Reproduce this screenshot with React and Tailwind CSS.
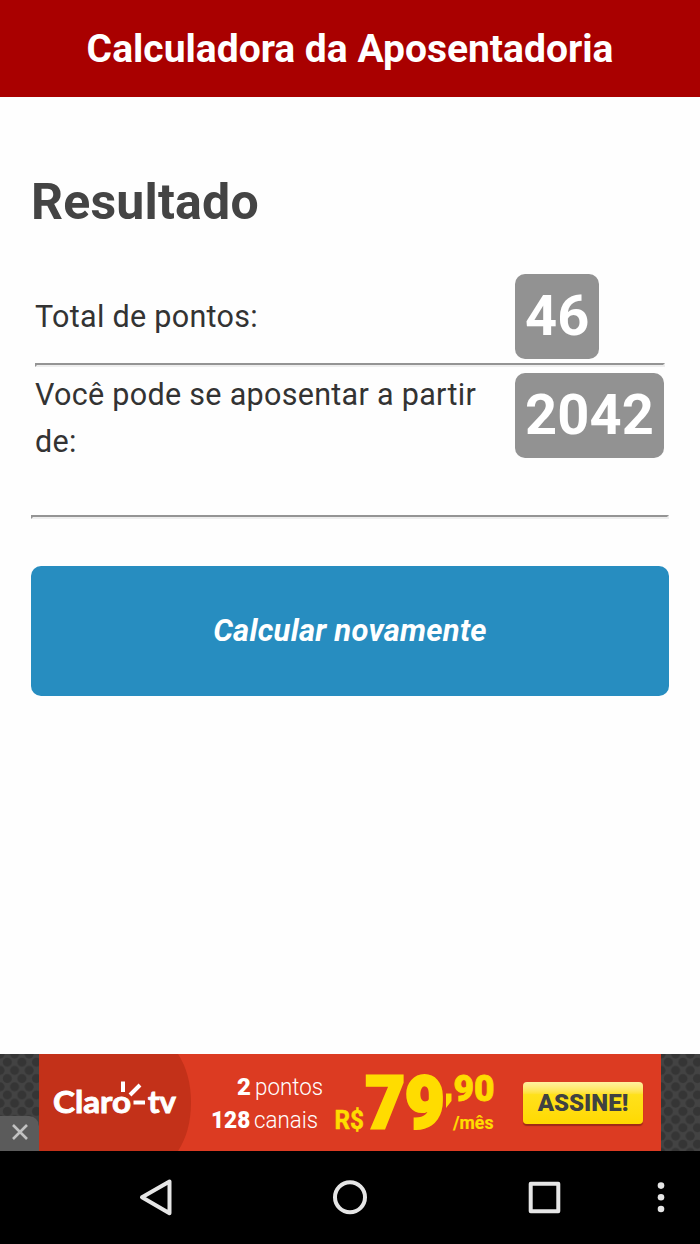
import React from "react";

function Rule() {
  return <hr className="h-1 border-2 border-t-[#949494] border-l-[#949494] border-r-[#eeeeee] border-b-[#eeeeee]" />;
}

function Badge({ children }) {
  return (
    <span className="inline-flex h-[85px] items-center rounded-[10px] bg-[#929292] px-[10px] pb-[1px] text-[56px] leading-none font-bold tracking-[0.100px] text-white">
      {children}
    </span>
  );
}

function Mesh({ id, className }) {
  return (
    <svg className={className} width="39" height="97" viewBox="0 0 39 97" aria-hidden="true">
      <defs>
        <pattern id={id} width="14.600" height="16.400" patternUnits="userSpaceOnUse">
          <rect width="14.600" height="16.400" fill="#434343" />
          <g fill="#353535">
            <circle cx="0" cy="0" r="4.600" />
            <circle cx="14.600" cy="0" r="4.600" />
            <circle cx="7.300" cy="8.200" r="4.600" />
            <circle cx="0" cy="16.400" r="4.600" />
            <circle cx="14.600" cy="16.400" r="4.600" />
          </g>
        </pattern>
      </defs>
      <rect width="39" height="97" fill={"url(#" + id + ")"} />
    </svg>
  );
}

function ClaroLogo() {
  return (
    <svg className="shrink-0" width="152" height="97" viewBox="0 0 152 97" aria-label="Claro tv">
      <path d="M0 0H139Q152 20 152 48.500T139 97H0Z" fill="#c33119" />
      <g fill="#fff" stroke="#fff" strokeWidth="0.900" fontFamily="Lato, sans-serif" fontWeight="700" fontSize="31">
        <text x="14" y="59" textLength="78" lengthAdjust="spacingAndGlyphs">Claro</text>
        <text x="109" y="59" textLength="28" lengthAdjust="spacingAndGlyphs">tv</text>
      </g>
      <path d="M84 27.500v10.500 M101 31l-10 10 M94.500 48.500h11.500" stroke="#fff" strokeWidth="4" fill="none" />
    </svg>
  );
}

function Price() {
  return (
    <svg className="shrink-0" width="176" height="97" viewBox="0 0 176 97" aria-label="R$79,90/mês">
      <g fill="#ffdc00" stroke="#ffdc00" fontFamily="Roboto, sans-serif">
        <text x="1.500" y="75" fontSize="25" fontWeight="700" strokeWidth="0.500" textLength="29.500" lengthAdjust="spacingAndGlyphs">R$</text>
        <text x="32.500" y="73.500" fontSize="72" fontWeight="900" strokeWidth="3" textLength="79" lengthAdjust="spacingAndGlyphs">79</text>
        <path d="M113 39.500h5.500v7.500l-5.500 7z" stroke="none" />
        <text x="120.500" y="46.500" fontSize="36" fontWeight="900" strokeWidth="0.800" textLength="41" lengthAdjust="spacingAndGlyphs">90</text>
        <text x="120" y="74.500" fontSize="18.500" fontWeight="700" strokeWidth="0.200" textLength="40.500" lengthAdjust="spacingAndGlyphs">/mês</text>
      </g>
    </svg>
  );
}

function AdBanner() {
  return (
    <aside className="relative flex h-[97px] bg-[#dc3b22]">
      <Mesh id="mesh-left" className="shrink-0" />
      <ClaroLogo />
      <div className="w-[142px] shrink-0 pt-[17px] text-[24px] leading-[33px] font-light text-white">
        <p className="flex gap-[4px] pl-[46px]">
          <b className="font-black">2</b>
          <span className="origin-left scale-x-[0.930]">pontos</span>
        </p>
        <p className="flex gap-[4px] pl-[20px]">
          <b className="w-[39px] origin-left scale-x-[0.940] font-black">128</b>
          <span className="origin-left scale-x-[0.930]">canais</span>
        </p>
      </div>
      <Price />
      <div className="flex flex-1 items-center">
        <button className="ml-[14px] h-[42px] w-[120px] shrink-0 rounded-[4px] bg-linear-to-b from-[#fff0a0] via-[#ffe11a] via-30% to-[#ffd900] text-[24px] leading-none font-black text-[#404142] shadow-[0_2px_1px_#9e2a18]">
          ASSINE!
        </button>
      </div>
      <Mesh id="mesh-right" className="shrink-0" />
      <button aria-label="Fechar" className="absolute bottom-0 left-0 flex h-[35px] w-[39px] items-center justify-center rounded-tr-[10px] bg-[#5b5b5b]">
        <svg className="-translate-y-[2px]" width="16" height="16" viewBox="0 0 16 16"><path d="M1 1l14 14M15 1L1 15" stroke="#c2c2c2" strokeWidth="2.600" /></svg>
      </button>
    </aside>
  );
}

function NavBar() {
  return (
    <nav className="h-[93px] bg-black">
      <svg width="700" height="93" viewBox="0 0 700 93" fill="none" stroke="#e6e6e6" strokeWidth="4" strokeLinejoin="round" aria-hidden="true">
        <path d="M169.500 30.500V62.200L142 46.300Z" />
        <circle cx="350" cy="46.300" r="15" />
        <rect x="530.700" y="32.700" width="27.600" height="27.600" />
        <g fill="#e6e6e6" stroke="none">
          <circle cx="661" cy="34.600" r="3.300" />
          <circle cx="661" cy="46.300" r="3.300" />
          <circle cx="661" cy="58" r="3.300" />
        </g>
      </svg>
    </nav>
  );
}

export default function App() {
  return (
    <div className="flex h-[1244px] w-[700px] flex-col overflow-hidden bg-[#fefefe] font-[Roboto,sans-serif]">
      <header className="flex h-[97px] shrink-0 items-center justify-center bg-[#a90000] pt-[2px] text-[39px] font-bold text-white">
        <h1 className="whitespace-nowrap">Calculadora da Aposentadoria</h1>
      </header>
      <main className="flex-1 px-[31px] pt-[75px]">
        <h2 className="h-[102px] text-[50px] leading-[60px] font-bold tracking-[0.200px] text-[#444444]">Resultado</h2>
        <section className="px-1 text-[30.500px] leading-[47px] tracking-[0.300px] text-[#333333]">
          <div className="flex h-[89px] items-start">
            <p className="w-[480px] shrink-0 pt-[19px]">Total de pontos:</p>
            <Badge>46</Badge>
          </div>
          <Rule />
          <div className="flex h-[148px] items-start pt-[6px]">
            <p className="-mt-[2px] w-[480px] shrink-0 pr-4">Você pode se aposentar a partir de:</p>
            <Badge>2042</Badge>
          </div>
        </section>
        <Rule />
        <button className="mt-[47px] h-[130px] w-full rounded-[10px] bg-[#278dc0] text-[31px] font-bold tracking-[0.250px] text-white italic">
          Calcular novamente
        </button>
      </main>
      <AdBanner />
      <NavBar />
    </div>
  );
}
